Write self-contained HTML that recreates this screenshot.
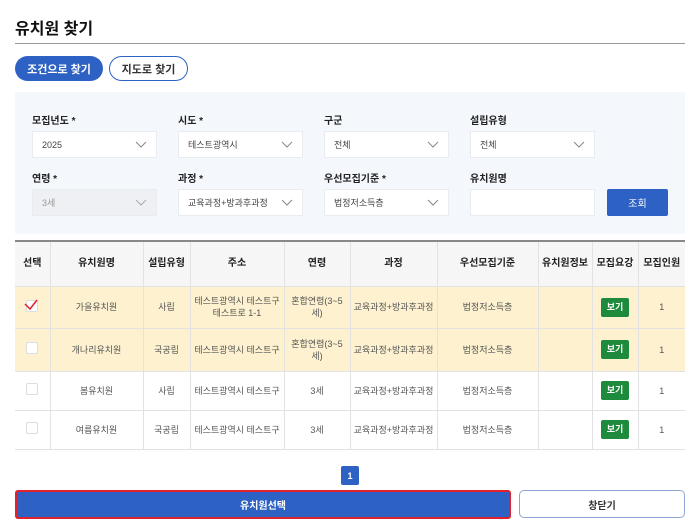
<!DOCTYPE html>
<html><head><meta charset="utf-8"><style>
*{box-sizing:border-box;margin:0;padding:0}
body{width:700px;height:531px;background:#fff;font-family:"Liberation Sans","Noto Sans CJK KR",sans-serif;color:#222;position:relative;overflow:hidden}
.a{position:absolute}
h1{position:absolute;left:15px;top:15px;font-size:16px;font-weight:700;color:#111}
.line{left:15px;top:43px;width:670px;height:1px;background:#999}
.pill{height:25px;border-radius:13px;font-size:11px;font-weight:700;display:flex;align-items:center;justify-content:center}
.panel{left:15px;top:92px;width:670px;height:142px;background:#f4f7fc}
.lbl{font-size:10px;font-weight:700;color:#222}
.sel{width:125px;height:27px;background:#fff;border:1px solid #e8ebf0;font-size:9px;color:#444;padding-left:9px;display:flex;align-items:center}
.sel svg{position:absolute;right:9px;top:9px}
table{position:absolute;left:15px;top:240px;width:670px;border-collapse:collapse;font-size:9px;color:#555}
table{border-top:2px solid #888;border-bottom:1px solid #999}
th,td{border:1px solid #e2e2e2;text-align:center;padding:0;line-height:12px}
th{background:#f6f6f6;font-size:10px;color:#222;font-weight:700;height:45px}
tr td:first-child,tr th:first-child{border-left:none}
tr td:last-child,tr th:last-child{border-right:none}
.y td{background:#fdf1cf}
.cb{display:inline-block;width:12px;height:12px;border:1px solid #ddd;background:#fff;border-radius:2px}
.bg{display:inline-block;background:#1e8a3c;color:#fff;font-weight:700;font-size:9px;width:28px;height:19px;line-height:19px;border-radius:2px}
</style></head><body>
<h1>유치원 찾기</h1>
<div class="a line"></div>
<div class="a pill" style="left:15px;top:56px;width:88px;background:#2d62c4;color:#fff">조건으로 찾기</div>
<div class="a pill" style="left:109px;top:56px;width:79px;border:1px solid #2d62c4;color:#333;background:#fff">지도로 찾기</div>
<div class="a panel"></div>
<div class="a lbl" style="left:32px;top:112px">모집년도 *</div>
<div class="a lbl" style="left:178px;top:112px">시도 *</div>
<div class="a lbl" style="left:324px;top:112px">구군</div>
<div class="a lbl" style="left:470px;top:112px">설립유형</div>
<div class="a lbl" style="left:32px;top:170px">연령 *</div>
<div class="a lbl" style="left:178px;top:170px">과정 *</div>
<div class="a lbl" style="left:324px;top:170px">우선모집기준 *</div>
<div class="a lbl" style="left:470px;top:170px">유치원명</div>
<div class="a sel" style="left:32px;top:131px">2025<svg width="12" height="8"><path d="M1 1l5 5 5-5" fill="none" stroke="#888" stroke-width="1"/></svg></div>
<div class="a sel" style="left:178px;top:131px">테스트광역시<svg width="12" height="8"><path d="M1 1l5 5 5-5" fill="none" stroke="#888" stroke-width="1"/></svg></div>
<div class="a sel" style="left:324px;top:131px">전체<svg width="12" height="8"><path d="M1 1l5 5 5-5" fill="none" stroke="#888" stroke-width="1"/></svg></div>
<div class="a sel" style="left:470px;top:131px">전체<svg width="12" height="8"><path d="M1 1l5 5 5-5" fill="none" stroke="#888" stroke-width="1"/></svg></div>
<div class="a sel" style="left:32px;top:189px;background:#eef0f3;color:#999">3세<svg width="12" height="8"><path d="M1 1l5 5 5-5" fill="none" stroke="#aaa" stroke-width="1"/></svg></div>
<div class="a sel" style="left:178px;top:189px">교육과정+방과후과정<svg width="12" height="8"><path d="M1 1l5 5 5-5" fill="none" stroke="#888" stroke-width="1"/></svg></div>
<div class="a sel" style="left:324px;top:189px">법정저소득층<svg width="12" height="8"><path d="M1 1l5 5 5-5" fill="none" stroke="#888" stroke-width="1"/></svg></div>
<div class="a sel" style="left:470px;top:189px"></div>
<div class="a" style="left:607px;top:189px;width:61px;height:27px;background:#2d62c4;border-radius:2px;color:#fff;font-size:10px;display:flex;align-items:center;justify-content:center">조회</div>
<table>
<colgroup><col style="width:35px"><col style="width:93px"><col style="width:47px"><col style="width:94px"><col style="width:66px"><col style="width:87px"><col style="width:101px"><col style="width:54px"><col style="width:46px"><col style="width:47px"></colgroup>
<tr><th>선택</th><th>유치원명</th><th>설립유형</th><th>주소</th><th>연령</th><th>과정</th><th>우선모집기준</th><th>유치원정보</th><th>모집요강</th><th>모집인원</th></tr>
<tr class="y" style="height:42px"><td style="position:relative"><span class="cb"></span><svg class="a" style="left:9px;top:12px" width="14" height="12"><path d="M1 5l5 5 7-9" fill="none" stroke="#e0202a" stroke-width="1.5"/></svg></td><td>가을유치원</td><td>사립</td><td>테스트광역시 테스트구<br>테스트로 1-1</td><td>혼합연령(3~5<br>세)</td><td>교육과정+방과후과정</td><td>법정저소득층</td><td></td><td><span class="bg">보기</span></td><td>1</td></tr>
<tr class="y" style="height:43px"><td><span class="cb"></span></td><td>개나리유치원</td><td>국공립</td><td>테스트광역시 테스트구</td><td>혼합연령(3~5<br>세)</td><td>교육과정+방과후과정</td><td>법정저소득층</td><td></td><td><span class="bg">보기</span></td><td>1</td></tr>
<tr style="height:39px"><td><span class="cb"></span></td><td>봄유치원</td><td>사립</td><td>테스트광역시 테스트구</td><td>3세</td><td>교육과정+방과후과정</td><td>법정저소득층</td><td></td><td><span class="bg">보기</span></td><td>1</td></tr>
<tr style="height:39px"><td><span class="cb"></span></td><td>여름유치원</td><td>국공립</td><td>테스트광역시 테스트구</td><td>3세</td><td>교육과정+방과후과정</td><td>법정저소득층</td><td></td><td><span class="bg">보기</span></td><td>1</td></tr>
</table>
<div class="a" style="left:341px;top:466px;width:18px;height:19px;background:#2d62c4;border-radius:2px;color:#fff;font-size:9px;font-weight:700;display:flex;align-items:center;justify-content:center">1</div>
<div class="a" style="left:15px;top:490px;width:496px;height:29px;background:#2d62c4;border:2px solid #e0202a;border-radius:3px;color:#fff;font-size:10px;font-weight:700;display:flex;align-items:center;justify-content:center">유치원선택</div>
<div class="a" style="left:519px;top:490px;width:166px;height:28px;border:1px solid #8ea6d6;border-radius:5px;color:#333;font-size:10px;font-weight:700;display:flex;align-items:center;justify-content:center">창닫기</div>
</body></html>
